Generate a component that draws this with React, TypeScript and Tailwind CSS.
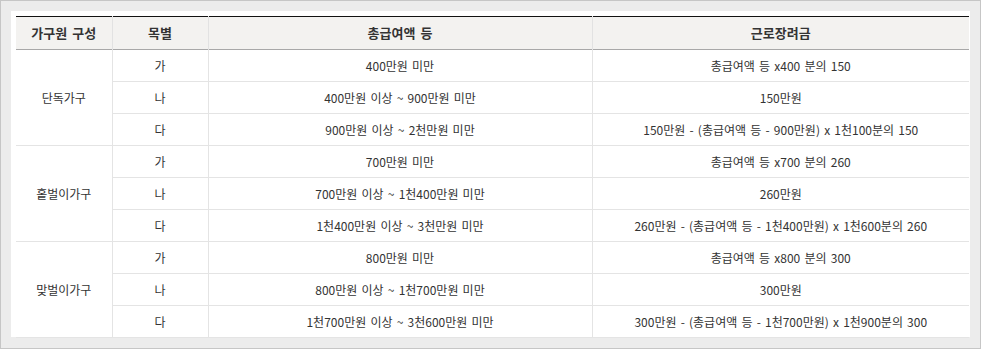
const groups = [
  {
    name: '단독가구',
    rows: [
      ['가', '400만원 미만', '총급여액 등 x400 분의 150'],
      ['나', '400만원 이상 ~ 900만원 미만', '150만원'],
      ['다', '900만원 이상 ~ 2천만원 미만', '150만원 - (총급여액 등 - 900만원) x 1천100분의 150'],
    ],
  },
  {
    name: '홑벌이가구',
    rows: [
      ['가', '700만원 미만', '총급여액 등 x700 분의 260'],
      ['나', '700만원 이상 ~ 1천400만원 미만', '260만원'],
      ['다', '1천400만원 이상 ~ 3천만원 미만', '260만원 - (총급여액 등 - 1천400만원) x 1천600분의 260'],
    ],
  },
  {
    name: '맞벌이가구',
    rows: [
      ['가', '800만원 미만', '총급여액 등 x800 분의 300'],
      ['나', '800만원 이상 ~ 1천700만원 미만', '300만원'],
      ['다', '1천700만원 이상 ~ 3천600만원 미만', '300만원 - (총급여액 등 - 1천700만원) x 1천900분의 300'],
    ],
  },
]

export default function App() {
  return (
    <div
      className="w-[981px] h-[349px] border border-[#c6c6c6] bg-[#ececec] pt-[10px] pl-[10px] pr-[10px] pb-[11px] text-[12px] text-[#333] [word-spacing:1.5px]"
      style={{ fontFamily: '"Noto Sans CJK KR", "Noto Sans", sans-serif' }}
    >
      <div className="h-full bg-white pl-[5px] pt-[5px] pr-[1px]">
        <table className="w-[953px] table-fixed border-collapse">
          <colgroup>
            <col className="w-[96px]" />
            <col className="w-[96px]" />
            <col className="w-[384px]" />
            <col />
          </colgroup>
          <thead>
            <tr className="h-[33px] bg-[#f3f2f0] border-t border-t-[#111] border-b border-b-[#a8a8a8] text-[13px] [word-spacing:2px]">
              <th className="font-bold text-[#333] border-r border-[#e2e2e2]">가구원 구성</th>
              <th className="font-bold text-[#333] border-r border-[#e2e2e2]">목별</th>
              <th className="font-bold text-[#333] border-r border-[#e2e2e2]">총급여액 등</th>
              <th className="font-bold text-[#333]">근로장려금</th>
            </tr>
          </thead>
          <tbody>
            {groups.map((g) =>
              g.rows.map((r, i) => (
                <tr key={g.name + i} className="h-[32px] border-b border-[#e4e4e4]">
                  {i === 0 && (
                    <td rowSpan={3} className="text-center border-r border-[#e4e4e4]">
                      {g.name}
                    </td>
                  )}
                  <td className="text-center border-r border-[#e4e4e4]">{r[0]}</td>
                  <td className="text-center border-r border-[#e4e4e4]">{r[1]}</td>
                  <td className="text-center">{r[2]}</td>
                </tr>
              ))
            )}
          </tbody>
        </table>
      </div>
    </div>
  )
}
